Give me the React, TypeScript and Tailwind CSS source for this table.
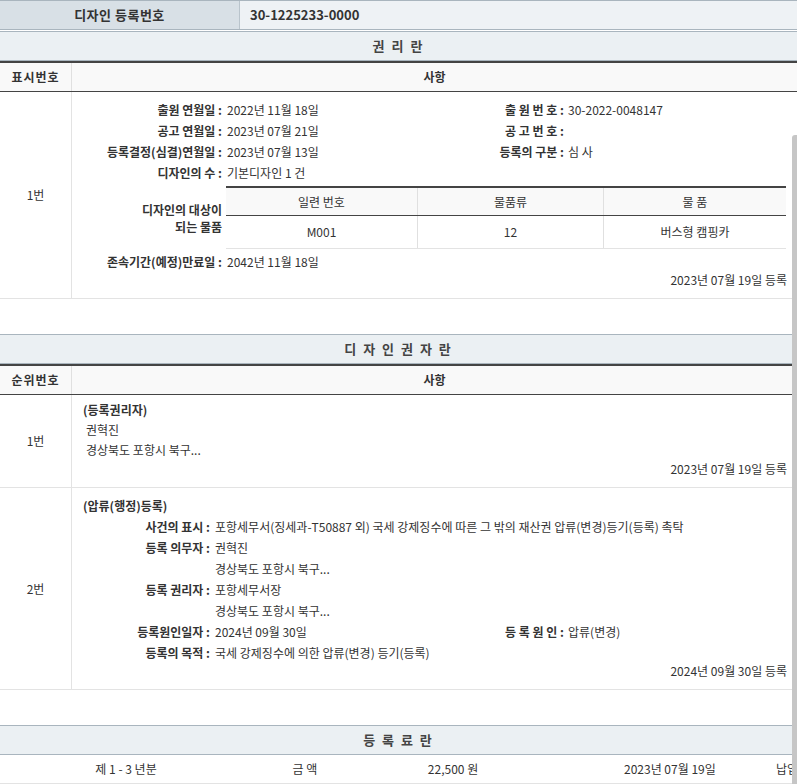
import React from "react";

// 섹션 제목 바 (권 리 란 / 디 자 인 권 자 란 / 등 록 료 란)
function SectionTitle({ title, thick = true }: { title: string; thick?: boolean }) {
  return (
    <div>
      <div className="flex h-[30px] items-center justify-center border-y border-[#a9b5be] bg-[#ebf0f3] text-[13px] font-bold tracking-[2px] text-[#444]">
        {title}
      </div>
      {thick && <div className="h-[2px] bg-[#444]" />}
    </div>
  );
}

function ColHeader({ first }: { first: string }) {
  return (
    <div className="flex h-[29px] border-b border-[#444] bg-[#f9f9f9] text-[12px] font-bold text-[#333]">
      <div className="flex w-[72px] items-center justify-center border-r border-[#e0e0e0] tracking-[1px]">
        {first}
      </div>
      <div className="flex flex-1 items-center justify-center">사항</div>
    </div>
  );
}

function Row({ num, children }: { num: string; children: React.ReactNode }) {
  return (
    <div className="flex border-b border-[#e3e3e3]">
      <div className="flex w-[72px] shrink-0 items-center justify-center border-r border-[#e3e3e3] text-[12px] text-[#333]">
        {num}
      </div>
      <div className="flex-1">{children}</div>
    </div>
  );
}

type LineProps = {
  label: string;
  value?: string;
  label2?: string;
  value2?: string;
  lw: string;
  vw?: string;
};

function Line({ label, value, label2, value2, lw, vw = "w-[250px]" }: LineProps) {
  return (
    <div className="flex h-[21px] items-center whitespace-nowrap text-[12px] text-[#333]">
      <div className={`${lw} shrink-0 pr-[5px] text-right font-bold`}>{label}</div>
      {label2 !== undefined ? (
        <>
          <div className={`${vw} shrink-0`}>{value}</div>
          <div className="w-[91px] shrink-0 pr-[4px] text-right font-bold">{label2}</div>
          <div className="flex-1">{value2}</div>
        </>
      ) : (
        <div className="flex-1">{value}</div>
      )}
    </div>
  );
}

export default function App() {
  return (
    <div className="relative h-[784px] w-full overflow-hidden bg-white font-['Noto_Sans_CJK_KR','Malgun_Gothic',sans-serif] text-[#333]">
      {/* 상단 등록번호 */}
      <div className="flex h-[30px] border-y border-[#a9b5be]">
        <div className="flex w-[240px] items-center justify-center border-r border-[#b9c4cc] bg-[#d8e0e6] text-[13px] font-bold tracking-[0.5px] text-[#333]">
          디자인 등록번호
        </div>
        <div className="flex flex-1 items-center bg-[#eef2f5] pl-[10px] text-[13px] font-bold text-[#333]">
          30-1225233-0000
        </div>
      </div>

      {/* 권리란 */}
      <div className="mt-[1px]">
        <SectionTitle title="권 리 란" />
        <ColHeader first="표시번호" />
        <Row num="1번">
          <div className="pb-[10px] pr-[10px] pt-[7px]">
            <Line lw="w-[155px]" label="출원 연월일 :" value="2022년 11월 18일" label2="출 원 번 호 :" value2="30-2022-0048147" />
            <Line lw="w-[155px]" label="공고 연월일 :" value="2023년 07월 21일" label2="공 고 번 호 :" value2="" />
            <Line lw="w-[155px]" label="등록결정(심결)연월일 :" value="2023년 07월 13일" label2="등록의 구분 :" value2="심 사" />
            <Line lw="w-[155px]" label="디자인의 수 :" value="기본디자인 1 건" />
            <div className="mt-[3px] flex items-center text-[12px]">
              <div className="w-[154px] shrink-0 pr-[4px] text-right font-bold leading-[17px]">
                디자인의 대상이
                <br />
                되는 물품
              </div>
              <div className="mr-[1px] flex-1 border-t-2 border-[#444]">
                <div className="grid h-[28px] grid-cols-[192px_186px_1fr] border-b border-[#444] bg-[#f9f9f9]">
                  <div className="flex items-center justify-center border-r border-[#e0e0e0]">일련 번호</div>
                  <div className="flex items-center justify-center border-r border-[#e0e0e0]">물품류</div>
                  <div className="flex items-center justify-center">물 품</div>
                </div>
                <div className="grid h-[33px] grid-cols-[192px_186px_1fr] border-b border-[#e3e3e3]">
                  <div className="flex items-center justify-center border-r border-[#e0e0e0]">M001</div>
                  <div className="flex items-center justify-center border-r border-[#e0e0e0]">12</div>
                  <div className="flex items-center justify-center">버스형 캠핑카</div>
                </div>
              </div>
            </div>
            <div className="mt-[2px]">
              <Line lw="w-[155px]" label="존속기간(예정)만료일 :" value="2042년 11월 18일" />
            </div>
            <div className="flex h-[16px] items-center justify-end text-[12px]">2023년 07월 19일 등록</div>
          </div>
        </Row>
      </div>

      {/* 디자인권자란 */}
      <div className="mt-[35px]">
        <SectionTitle title="디 자 인 권 자 란" />
        <ColHeader first="순위번호" />
        <Row num="1번">
          <div className="pb-[10px] pl-[11px] pr-[10px] pt-[5px] text-[12px]">
            <div className="flex h-[20px] items-center font-bold">(등록권리자)</div>
            <div className="flex h-[20px] items-center pl-[3px]">권혁진</div>
            <div className="flex h-[20px] items-center pl-[3px]">경상북도 포항시 북구...</div>
            <div className="mt-[1px] flex h-[16px] items-center justify-end">2023년 07월 19일 등록</div>
          </div>
        </Row>
        <Row num="2번">
          <div className="pb-[10px] pr-[10px] pt-[7px] text-[12px]">
            <div className="flex h-[21px] items-center pl-[11px] font-bold">(압류(행정)등록)</div>
            <Line lw="w-[143px]" label="사건의 표시 :" value="포항세무서(징세과-T50887 외) 국세 강제징수에 따른 그 밖의 재산권 압류(변경)등기(등록) 촉탁" />
            <Line lw="w-[143px]" label="등록 의무자 :" value="권혁진" />
            <Line lw="w-[143px]" label="" value="경상북도 포항시 북구..." />
            <Line lw="w-[143px]" label="등록 권리자 :" value="포항세무서장" />
            <Line lw="w-[143px]" label="" value="경상북도 포항시 북구..." />
            <Line lw="w-[143px]" vw="w-[262px]" label="등록원인일자 :" value="2024년 09월 30일" label2="등 록 원 인 :" value2="압류(변경)" />
            <Line lw="w-[143px]" label="등록의 목적 :" value="국세 강제징수에 의한 압류(변경) 등기(등록)" />
            <div className="flex h-[16px] items-center justify-end">2024년 09월 30일 등록</div>
          </div>
        </Row>
      </div>

      {/* 등록료란 */}
      <div className="mt-[35px]">
        <SectionTitle title="등 록 료 란" thick={false} />
        <div className="flex h-[29px] items-center whitespace-nowrap border-b border-[#e3e3e3] text-[12px]">
          <div className="w-[252px] shrink-0 text-center">제 1 - 3 년분</div>
          <div className="w-[106px] shrink-0 text-center">금 액</div>
          <div className="w-[190px] shrink-0 text-center">22,500 원</div>
          <div className="w-[228px] shrink-0 pl-[76px]">2023년 07월 19일</div>
          <div>납입</div>
        </div>
      </div>

      {/* 스크롤바 */}
      <div className="absolute right-0 top-[135px] h-[649px] w-[5px] rounded-tl-[3px] bg-[#c6c6c6]" />
    </div>
  );
}
